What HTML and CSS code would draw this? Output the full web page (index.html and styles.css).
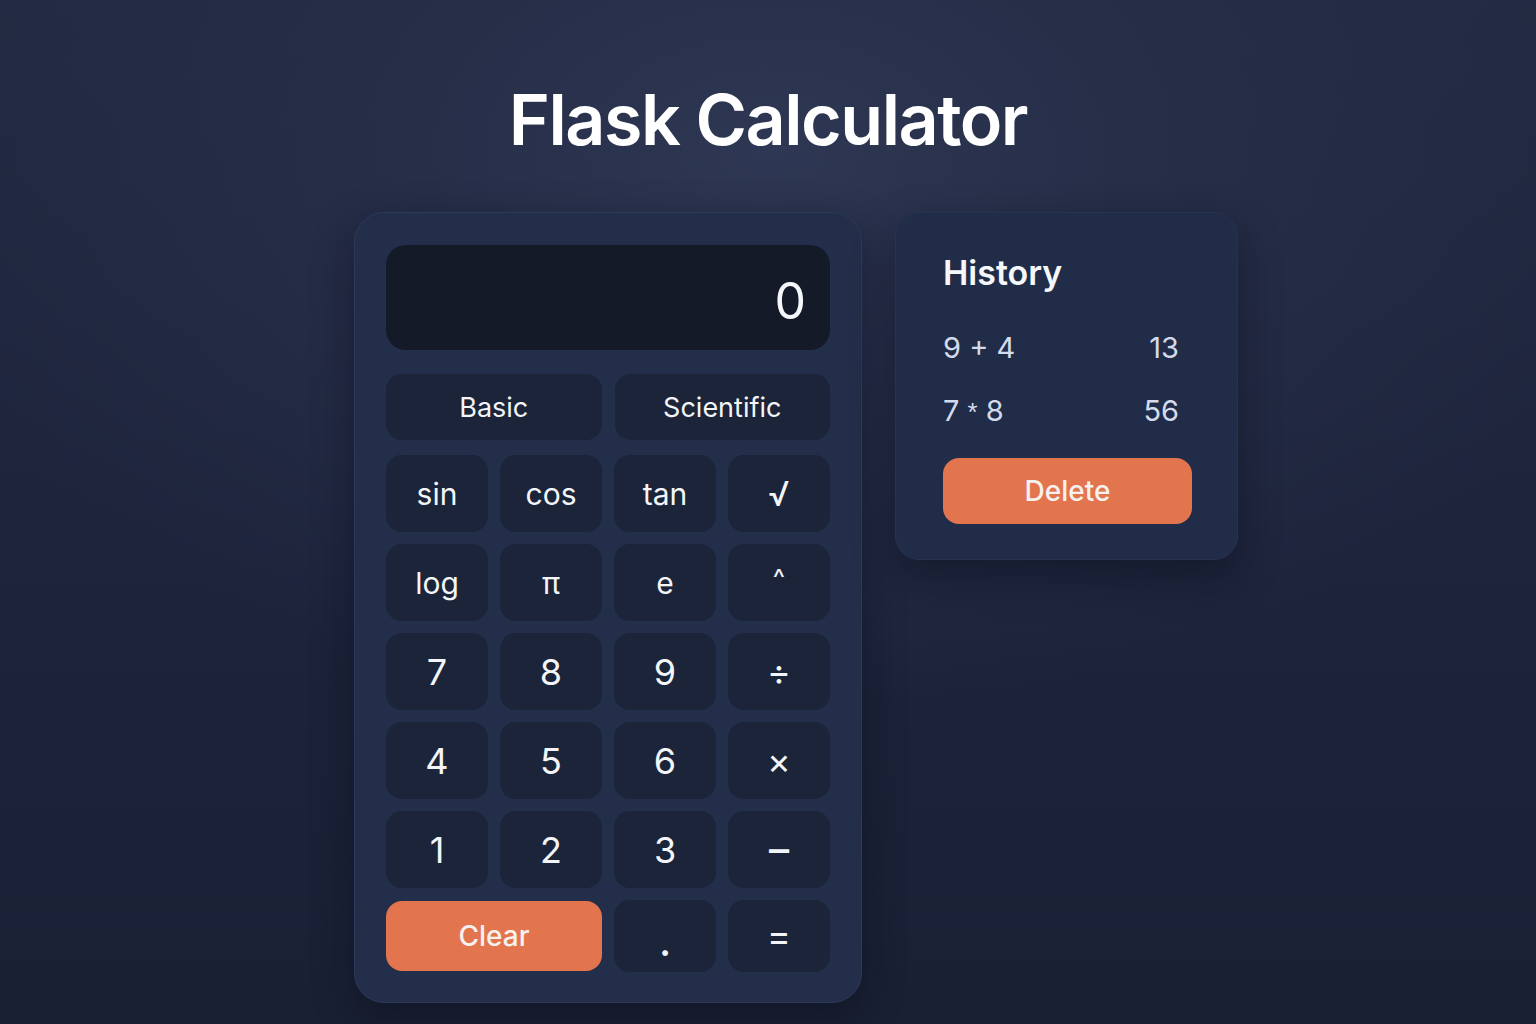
FILE: index.html
```html
<!DOCTYPE html>
<html lang="en">
<head>
<meta charset="utf-8">
<title>Flask Calculator</title>
<link rel="stylesheet" href="styles.css">
</head>
<body>
  <h1 class="title">Flask Calculator</h1>
  <main class="layout">
    <section class="calc">
      <div class="display">0</div>
      <div class="modes">
        <button class="key mode">Basic</button>
        <button class="key mode">Scientific</button>
      </div>
      <div class="keys">
        <button class="key fn">sin</button>
        <button class="key fn">cos</button>
        <button class="key fn">tan</button>
        <button class="key fn root">√</button>
        <button class="key fn">log</button>
        <button class="key fn">π</button>
        <button class="key fn">e</button>
        <button class="key fn caret">^</button>
        <button class="key num">7</button>
        <button class="key num">8</button>
        <button class="key num">9</button>
        <button class="key op">÷</button>
        <button class="key num">4</button>
        <button class="key num">5</button>
        <button class="key num">6</button>
        <button class="key op">×</button>
        <button class="key num">1</button>
        <button class="key num">2</button>
        <button class="key num">3</button>
        <button class="key op minus">−</button>
        <button class="key clear">Clear</button>
        <button class="key num dot">.</button>
        <button class="key op">=</button>
      </div>
    </section>
    <aside class="history">
      <h2 class="history-title">History</h2>
      <ul class="history-list">
        <li class="history-row"><span>9 + 4</span><span>13</span></li>
        <li class="history-row"><span>7 <span class="star">*</span> 8</span><span>56</span></li>
      </ul>
      <button class="delete">Delete</button>
    </aside>
  </main>
</body>
</html>
```
FILE: styles.css
```css
* { box-sizing: border-box; }

html, body { height: 100%; }

body {
  margin: 0;
  min-height: 1024px;
  font-family: Inter, "Noto Sans", "Liberation Sans", sans-serif;
  color: #f3f5f9;
  background:
    radial-gradient(ellipse 900px 560px at 770px 150px, #2e3753 0%, #262e48 40%, rgba(30,37,58,0) 100%),
    linear-gradient(180deg, #222a42 0%, #1c233a 60%, #1a2034 100%);
  overflow: hidden;
}

.title {
  margin: 75px 0 0;
  text-align: center;
  font-size: 70px;
  line-height: 90px;
  font-weight: 600;
  letter-spacing: -1.5px;
  color: #ffffff;
}

.layout {
  display: flex;
  justify-content: center;
  align-items: flex-start;
  gap: 33px;
  margin: 47px 0 0 56px;
}

.calc {
  width: 508px;
  padding: 32px 31px 30px 31px;
  background: #222e4a;
  border: 1px solid #2c3958;
  border-radius: 30px;
  box-shadow: 0 14px 40px rgba(8, 12, 24, 0.45);
}

.display {
  height: 105px;
  border-radius: 20px;
  background: #151a29;
  display: flex;
  align-items: center;
  justify-content: flex-end;
  padding: 6px 24px 0 0;
  font-size: 50px;
  font-weight: 400;
  color: #f5f6fa;
}

.modes {
  display: grid;
  grid-template-columns: 1fr 1fr;
  gap: 13px;
  margin-top: 24px;
}

.key {
  border: none;
  font-family: inherit;
  color: #f3f5f9;
  background: #1b2438;
  border-radius: 16px;
  display: flex;
  align-items: center;
  justify-content: center;
  padding: 0;
}

.mode {
  height: 66px;
  font-size: 27px;
}

.keys {
  display: grid;
  grid-template-columns: repeat(4, 1fr);
  grid-template-rows: repeat(5, 77px) 72px;
  gap: 12px 12px;
  margin-top: 15px;
}

.fn { font-size: 30px; }
.root { font-size: 34px; }
.num { font-size: 36px; }
.op { font-size: 36px; }
.minus { font-size: 44px; padding-bottom: 4px; }
.caret { font-size: 26px; padding-bottom: 10px; }
.dot { font-size: 44px; padding-top: 8px; }

.clear {
  grid-column: span 2;
  height: 70px;
  align-self: center;
  background: #e2744e;
  font-size: 28px;
  font-weight: 500;
  color: #f6f1ee;
}

.history {
  width: 343px;
  padding: 40px 46px 35px 47px;
  background: #212d48;
  border: 1px solid #26324f;
  border-radius: 24px;
  box-shadow: 0 16px 40px rgba(8, 12, 24, 0.45);
}

.history-title {
  margin: 0;
  font-size: 34px;
  line-height: 40px;
  font-weight: 600;
  color: #f6f7fb;
}

.history-list {
  list-style: none;
  margin: 37px 0 0;
  padding: 0 12px 0 0;
  display: flex;
  flex-direction: column;
  gap: 27px;
}

.history-row {
  display: flex;
  justify-content: space-between;
  font-size: 29px;
  line-height: 36px;
  color: #d3dbec;
}

.star {
  font-family: "Liberation Sans", sans-serif;
  font-size: 26px;
}

.delete {
  display: block;
  width: 249px;
  height: 66px;
  margin-top: 28px;
  border: none;
  border-radius: 16px;
  background: #e2744e;
  font-family: inherit;
  font-size: 28px;
  font-weight: 500;
  color: #f6f1ee;
}
```
